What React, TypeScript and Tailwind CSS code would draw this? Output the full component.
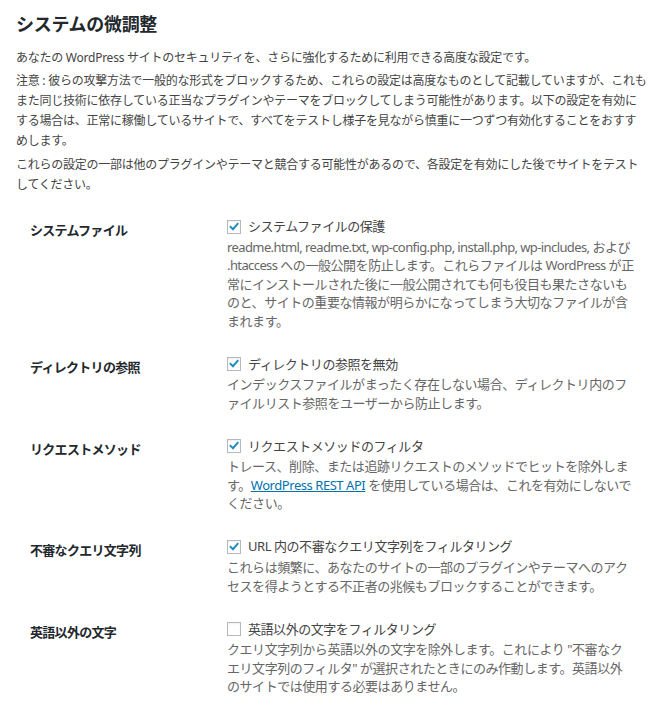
import type { ReactNode } from 'react';

type Setting = {
  title: string;
  label: string;
  checked: boolean;
  lines: ReactNode[];
};

const settings: Setting[] = [
  {
    title: 'システムファイル',
    label: 'システムファイルの保護',
    checked: true,
    lines: [
      <>
        <span className="tracking-[-0.6px]">readme.html, readme.txt, wp-config.php, install.php, wp-includes,</span> および
      </>,
      <>
        <span className="tracking-[-0.6px]">.htaccess</span> への一般公開を防止します。これらファイルは{' '}
        <span className="tracking-[-0.6px]">WordPress</span> が正
      </>,
      '常にインストールされた後に一般公開されても何も役目も果たさないも',
      'のと、サイトの重要な情報が明らかになってしまう大切なファイルが含',
      'まれます。',
    ],
  },
  {
    title: 'ディレクトリの参照',
    label: 'ディレクトリの参照を無効',
    checked: true,
    lines: [
      'インデックスファイルがまったく存在しない場合、ディレクトリ内のフ',
      'ァイルリスト参照をユーザーから防止します。',
    ],
  },
  {
    title: 'リクエストメソッド',
    label: 'リクエストメソッドのフィルタ',
    checked: true,
    lines: [
      'トレース、削除、または追跡リクエストのメソッドでヒットを除外しま',
      <>
        す。<a href="#" className="text-[#0073aa] underline">WordPress REST API</a> を使用している場合は、これを有効にしないで
      </>,
      'ください。',
    ],
  },
  {
    title: '不審なクエリ文字列',
    label: 'URL 内の不審なクエリ文字列をフィルタリング',
    checked: true,
    lines: [
      'これらは頻繁に、あなたのサイトの一部のプラグインやテーマへのアク',
      'セスを得ようとする不正者の兆候もブロックすることができます。',
    ],
  },
  {
    title: '英語以外の文字',
    label: '英語以外の文字をフィルタリング',
    checked: false,
    lines: [
      'クエリ文字列から英語以外の文字を除外します。これにより "不審なク',
      'エリ文字列のフィルタ" が選択されたときにのみ作動します。英語以外',
      'のサイトでは使用する必要はありません。',
    ],
  },
];

function Checkbox({ checked }: { checked: boolean }) {
  return (
    <span className="flex h-[14px] w-[14px] shrink-0 items-center justify-center border border-[#b4b9be] bg-white shadow-[inset_0_1px_2px_rgba(0,0,0,0.07)]">
      {checked && (
        <svg viewBox="0 0 14 14" className="h-[14px] w-[14px]">
          <path d="M3 6.8 L5.8 9.6 L11.2 3.4" fill="none" stroke="#1e8cbe" strokeWidth="2.3" strokeLinecap="square" />
        </svg>
      )}
    </span>
  );
}

export default function App() {
  return (
    <div className="min-h-screen bg-white px-4 pt-[11px] font-['Noto_Sans','Noto_Sans_CJK_JP',sans-serif] text-[#444]">
      <h2 className="text-[18px] font-bold leading-[26px] tracking-[-0.3px] text-[#23282d]">システムの微調整</h2>

      <div className="mt-[11px] whitespace-nowrap text-[12px] leading-[20px] tracking-[-0.25px]">
        <p>あなたの WordPress サイトのセキュリティを、さらに強化するために利用できる高度な設定です。</p>
        <p className="mt-[3px]">
          注意 : 彼らの攻撃方法で一般的な形式をブロックするため、これらの設定は高度なものとして記載していますが、これも
          <br />
          また同じ技術に依存している正当なプラグインやテーマをブロックしてしまう可能性があります。以下の設定を有効に
          <br />
          する場合は、正常に稼働しているサイトで、すべてをテストし様子を見ながら慎重に一つずつ有効化することをおすす
          <br />
          めします。
        </p>
        <p className="mt-[4px]">
          これらの設定の一部は他のプラグインやテーマと競合する可能性があるので、各設定を有効にした後でサイトをテスト
          <br />
          してください。
        </p>
      </div>

      <div className="mt-[9px] pl-[14px]">
        {settings.map((s) => (
          <div key={s.title} className="grid grid-cols-[197px_1fr] py-[11.6px]">
            <div className="pt-[3px] text-[13px] font-bold leading-[22px] tracking-[-0.7px] text-[#23282d]">
              {s.title}
            </div>
            <div className="whitespace-nowrap text-[13px] tracking-[-0.45px]">
              <label className="flex h-[22px] items-center gap-[7px]">
                <Checkbox checked={s.checked} />
                <span className="text-[#444]">{s.label}</span>
              </label>
              <div className="leading-[18.5px] text-[#666]">
                {s.lines.map((line, i) => (
                  <div key={i}>{line}</div>
                ))}
              </div>
            </div>
          </div>
        ))}
      </div>
    </div>
  );
}
